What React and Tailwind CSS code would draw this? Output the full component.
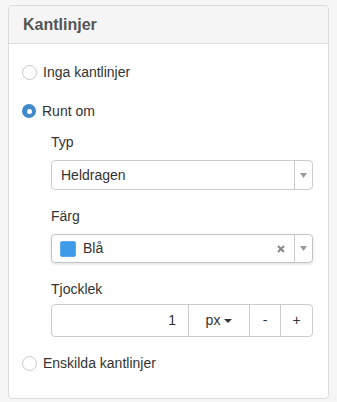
const Radio = ({ checked, label }) => (
  <div className="flex items-center h-5">
    {checked ? (
      <span className="w-[14px] h-[14px] rounded-full bg-[#428bca] flex items-center justify-center">
        <span className="w-[5px] h-[5px] rounded-full bg-white" />
      </span>
    ) : (
      <span className="w-[15px] h-[15px] rounded-full border border-[#c8c8c8] bg-white" />
    )}
    <span className="ml-[6px] text-[14px] text-[#333]">{label}</span>
  </div>
);

const Caret = () => (
  <svg width="7" height="5" viewBox="0 0 7 5">
    <path d="M0 0h7L3.5 5z" fill="#999" />
  </svg>
);

const App = () => {
  return (
    <div
      className="min-h-[402px] bg-[#f6f6f6] px-2 pt-[5px] pb-[5px]"
      style={{ fontFamily: '"Liberation Sans", Arial, sans-serif' }}
    >
      <div className="bg-white border border-[#dcdcdc] rounded-[4px]">
        <div className="h-[38px] bg-[#f5f5f5] border-b border-[#dcdcdc] rounded-t-[4px] flex items-center px-[14px]">
          <h3 className="text-[16px] font-bold text-[#555]">Kantlinjer</h3>
        </div>
        <div className="pl-[13px] pr-[15px] pt-[18px] pb-[25px]">
          <Radio label="Inga kantlinjer" />
          <div className="mt-[19px]">
            <Radio checked label="Runt om" />
          </div>
          <div className="pl-[29px]">
            <div className="mt-[11px] h-5 leading-5 text-[14px] text-[#333]">Typ</div>
            <div className="mt-2 h-[30px] border border-[#ccc] rounded-[4px] flex items-center">
              <span className="flex-1 pl-[9px] text-[14px] text-[#333]">Heldragen</span>
              <span className="w-[18px] h-full border-l border-[#ccc] flex items-center justify-center">
                <Caret />
              </span>
            </div>
            <div className="mt-4 h-5 leading-5 text-[14px] text-[#333]">Färg</div>
            <div className="mt-2 h-[29px] border border-[#c4c4c4] rounded-[4px] flex items-center shadow-[0_1px_3px_rgba(0,0,0,0.15)]">
              <span className="ml-[8px] w-[16px] h-[16px] bg-[#3d9be9] rounded-[2px] border border-[#5aa9ec]" />
              <span className="flex-1 pl-[7px] text-[14px] text-[#333]">Blå</span>
              <svg className="mr-[9px]" width="8" height="8" viewBox="0 0 8 8">
                <path d="M1 1l6 6M7 1L1 7" stroke="#888" strokeWidth="2" />
              </svg>
              <span className="w-[18px] h-full border-l border-[#ccc] flex items-center justify-center">
                <Caret />
              </span>
            </div>
            <div className="mt-4 h-5 leading-5 text-[14px] text-[#333]">Tjocklek</div>
            <div className="mt-[5px] h-[33px] border border-[#ccc] rounded-[4px] flex text-[14px] text-[#333]">
              <span className="w-[136px] flex items-center justify-end pr-[12px]">1</span>
              <span className="w-[61px] border-l border-[#ccc] flex items-center justify-center gap-[4px]">
                px
                <svg width="8" height="4" viewBox="0 0 8 4">
                  <path d="M0 0h8L4 4z" fill="#333" />
                </svg>
              </span>
              <span className="w-[31px] border-l border-[#ccc] flex items-center justify-center">-</span>
              <span className="flex-1 border-l border-[#ccc] flex items-center justify-center">+</span>
            </div>
          </div>
          <div className="mt-4">
            <Radio label="Enskilda kantlinjer" />
          </div>
        </div>
      </div>
    </div>
  );
};

export default App;
